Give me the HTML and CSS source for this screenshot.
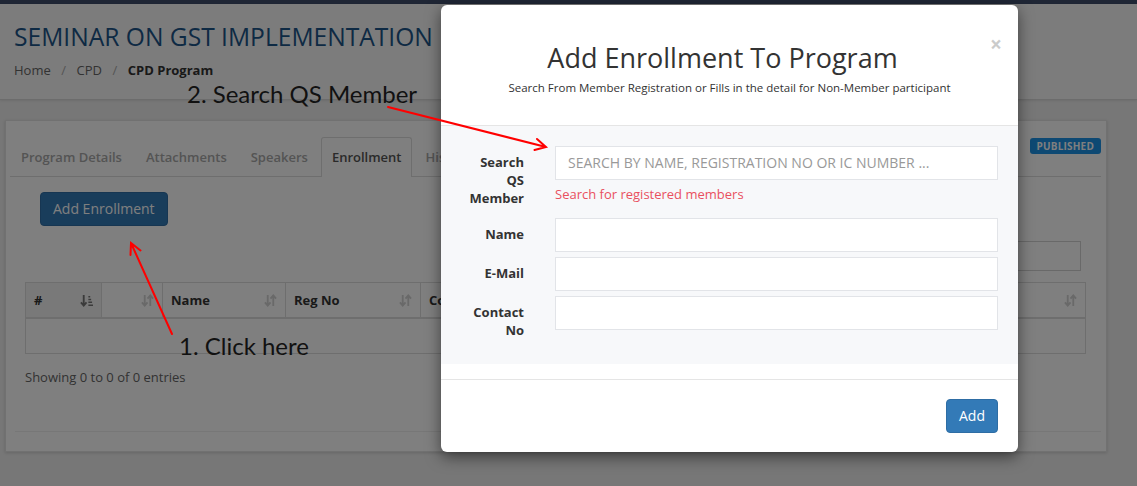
FILE: index.html
```html
<!DOCTYPE html>
<html>
<head>
<meta charset="utf-8">
<link rel="stylesheet" href="styles.css">
</head>
<body>
<div class="topbar"></div>
<header class="page-head">
  <h1 class="page-title">SEMINAR ON GST IMPLEMENTATION</h1>
  <nav class="crumbs"><span>Home</span><span class="sep">/</span><span>CPD</span><span class="sep">/</span><b>CPD Program</b></nav>
</header>
<main class="content">
  <section class="card">
    <div class="tabbar">
      <span class="tab">Program Details</span>
      <span class="tab">Attachments</span>
      <span class="tab">Speakers</span>
      <span class="tab active">Enrollment</span>
      <span class="tab">History</span>
      <span class="badge">PUBLISHED</span>
    </div>
    <div class="pane">
      <div class="btn-row"><span class="btn-dark">Add Enrollment</span></div>
      <div class="filter-row"><span class="filter-box"></span></div>
      <div class="table">
        <div class="tr head">
          <div class="th sorted c1"># <svg class="ico dark" viewBox="0 0 14 14" width="13" height="13"><path d="M4 1v11M1 9l3 3.5 3-3.5" fill="none" stroke="currentColor" stroke-width="2"/><path d="M9 3h2M9 6h3M9 9h4M9 12h5" stroke="currentColor" stroke-width="1.6"/></svg></div>
          <div class="th c2"><span></span><svg class="ico" viewBox="0 0 14 14" width="13" height="13"><path d="M4 1v11M1 9l3 3.5 3-3.5M10 13V2M7 5l3-3.5 3 3.5" fill="none" stroke="currentColor" stroke-width="2"/></svg></div>
          <div class="th c3">Name <svg class="ico" viewBox="0 0 14 14" width="13" height="13"><path d="M4 1v11M1 9l3 3.5 3-3.5M10 13V2M7 5l3-3.5 3 3.5" fill="none" stroke="currentColor" stroke-width="2"/></svg></div>
          <div class="th c4">Reg No <svg class="ico" viewBox="0 0 14 14" width="13" height="13"><path d="M4 1v11M1 9l3 3.5 3-3.5M10 13V2M7 5l3-3.5 3 3.5" fill="none" stroke="currentColor" stroke-width="2"/></svg></div>
          <div class="th c5">Contact No <svg class="ico" viewBox="0 0 14 14" width="13" height="13"><path d="M4 1v11M1 9l3 3.5 3-3.5M10 13V2M7 5l3-3.5 3 3.5" fill="none" stroke="currentColor" stroke-width="2"/></svg></div>
          <div class="th c6">Status <svg class="ico" viewBox="0 0 14 14" width="13" height="13"><path d="M4 1v11M1 9l3 3.5 3-3.5M10 13V2M7 5l3-3.5 3 3.5" fill="none" stroke="currentColor" stroke-width="2"/></svg></div>
        </div>
        <div class="tr body"><div class="td"></div></div>
      </div>
      <p class="info">Showing 0 to 0 of 0 entries</p>
    </div>
    <div class="card-foot"></div>
  </section>
</main>

<div class="backdrop"></div>

<div class="modal">
  <div class="modal-head">
    <span class="close">×</span>
    <h2 class="modal-title">Add Enrollment To Program</h2>
    <p class="modal-sub">Search From Member Registration or Fills in the detail for Non-Member participant</p>
  </div>
  <div class="modal-form">
    <div class="frow first">
      <label class="flabel">Search QS Member</label>
      <div class="fcol">
        <div class="finput placeholder">SEARCH BY NAME, REGISTRATION NO OR IC NUMBER ...</div>
        <div class="fhelp">Search for registered members</div>
      </div>
    </div>
    <div class="frow">
      <label class="flabel">Name</label>
      <div class="fcol"><div class="finput"></div></div>
    </div>
    <div class="frow">
      <label class="flabel">E-Mail</label>
      <div class="fcol"><div class="finput"></div></div>
    </div>
    <div class="frow">
      <label class="flabel">Contact No</label>
      <div class="fcol"><div class="finput"></div></div>
    </div>
  </div>
  <div class="modal-foot"><span class="btn-add">Add</span></div>
</div>

<div class="note note-2">2. Search QS Member</div>
<div class="note note-1">1. Click here</div>
<svg class="arrows" width="1137" height="486" viewBox="0 0 1137 486">
  <g fill="none" stroke="#ff0000" stroke-width="2" stroke-linecap="round">
    <path d="M388 107 L546 147 M534.5 150 L546 147 L537 139"/>
    <path d="M172 334 L131 243 M140.5 250.5 L131 243 L130.5 255"/>
  </g>
</svg>
</body>
</html>
```
FILE: styles.css
```css
* { box-sizing: border-box; }
html, body { margin: 0; padding: 0; }
body {
  width: 1137px;
  height: 486px;
  overflow: hidden;
  background: #eeeeee;
  font-family: "Open Sans", "Liberation Sans", sans-serif;
  color: #333;
  font-size: 13px;
  position: relative;
}
.topbar { height: 4px; background: #3e4c6a; }
.page-head {
  height: 96px;
  background: #f9f9f9;
  border-bottom: 1px solid #d8d8d8;
  box-shadow: 0 1px 2px rgba(0,0,0,0.08);
  padding: 18px 14px 0;
}
.page-title {
  margin: 0;
  font-size: 24.6px;
  font-weight: 400;
  line-height: 30px;
  color: #1c5488;
  letter-spacing: 0;
}
.crumbs { margin-top: 9px; font-size: 13px; color: #666; line-height: 18px; }
.crumbs .sep { color: #aaa; margin: 0 10.5px; }
.crumbs b { color: #333; font-weight: 700; }

.content { padding: 20px 30px 0 5px; }
.card {
  width: 1102px;
  height: 332px;
  background: #fff;
  border: 1px solid #e2e2e2;
  box-shadow: 0 1px 3px rgba(0,0,0,0.15);
  padding: 17px 5px 0 4px;
  display: flex;
  flex-direction: column;
}
.tabbar {
  display: flex;
  align-items: flex-end;
  border-bottom: 1px solid #ddd;
  height: 39px;
}
.tab {
  padding: 0 10px;
  height: 39px;
  line-height: 38px;
  margin-right: 2px;
  font-weight: 600;
  color: #a8a8a8;
  border: 1px solid transparent;
  border-bottom: none;
  border-radius: 3px 3px 0 0;
}
.tab.active {
  color: #555;
  background: #fff;
  border-color: #ddd;
  height: 40px;
  margin-bottom: -1px;
}
.badge {
  margin-left: auto;
  align-self: flex-start;
  background: #1c92e6;
  color: #fff;
  font-size: 10px;
  font-weight: 700;
  line-height: 16px;
  height: 16px;
  padding: 0 7px;
  border-radius: 3px;
  letter-spacing: 0.2px;
}
.pane { padding: 15px 15px 0; flex: 1; }
.btn-row { padding-left: 15px; }
.btn-dark {
  display: inline-block;
  height: 34px;
  line-height: 32px;
  padding: 0 12px;
  background: #337ab7;
  border: 1px solid #2e6da4;
  color: #fff;
  font-size: 14px;
  border-radius: 4px;
}
.filter-row { display: flex; justify-content: flex-end; padding-right: 5px; margin-top: 15px; }
.filter-box { width: 200px; height: 30px; border: 1px solid #d2d2d2; background: #fff; }
.table { margin-top: 11px; width: 1061px; border: 1px solid #ddd; }
.tr { display: flex; }
.tr.head { height: 36px; border-bottom: 2px solid #ddd; }
.th {
  display: flex;
  align-items: center;
  justify-content: space-between;
  padding: 0 8px;
  font-weight: 700;
  color: #333;
  border-right: 1px solid #ddd;
  font-size: 13px;
}
.th.sorted { background: #f3f3f3; }
.c1 { width: 76px; }
.c2 { width: 61px; }
.c3 { width: 123px; }
.c4 { width: 135px; }
.c5 { width: 380px; }
.c6 { flex: 1; border-right: none; }
.ico { color: #d2d2d2; flex: none; }
.ico.dark { color: #777; }
.tr.body { height: 34px; }
.info { margin: 14px 0 0; font-size: 13px; color: #666; line-height: 18px; }
.card-foot { height: 20px; border-top: 1px solid #eee; margin: 0 0 0 5px; }

.backdrop {
  position: absolute;
  inset: 0;
  background: rgba(0,0,0,0.5);
}

.modal {
  position: absolute;
  left: 441px;
  top: 5px;
  width: 577px;
  height: 447px;
  background: #fff;
  border-radius: 6px;
  box-shadow: 0 5px 15px rgba(0,0,0,0.5);
  display: flex;
  flex-direction: column;
}
.modal-head {
  position: relative;
  height: 121px;
  border-bottom: 1px solid #e5e5e5;
  padding-top: 36px;
  text-align: center;
}
.close {
  position: absolute;
  right: 16px;
  top: 27px;
  font-size: 21px;
  font-weight: 700;
  line-height: 24px;
  color: #000;
  opacity: 0.2;
}
.modal-title {
  margin: 0;
  padding-right: 14px;
  font-size: 27px;
  font-weight: 400;
  line-height: 34px;
  color: #333;
}
.modal-sub { margin: 5px 0 0; font-size: 11.5px; line-height: 15px; color: #333; }
.modal-form {
  background: #f7f8fa;
  height: 238px;
  padding: 20px 20px 0 23px;
}
.frow {
  display: grid;
  grid-template-columns: 60px 1fr;
  column-gap: 31px;
  margin-bottom: 5px;
}
.frow.first { margin-bottom: 11px; }
.flabel {
  text-align: right;
  font-weight: 700;
  font-size: 13px;
  line-height: 18px;
  padding-top: 7px;
  color: #333;
}
.finput {
  height: 34px;
  background: #fff;
  border: 1px solid #e2e4e8;
  padding: 0 12px;
  line-height: 32px;
  font-size: 14px;
}
.finput.placeholder { color: #999; }
.fhelp { margin-top: 5px; color: #e9505f; font-size: 13px; line-height: 18px; }
.modal-foot {
  margin-top: 15px;
  border-top: 1px solid #e5e5e5;
  padding: 19px 20px;
  display: flex;
  justify-content: flex-end;
}
.btn-add {
  display: inline-block;
  height: 34px;
  line-height: 32px;
  padding: 0 12px;
  background: #337ab7;
  border: 1px solid #2e6da4;
  color: #fff;
  font-size: 14px;
  border-radius: 4px;
}

.note {
  position: absolute;
  font-family: Lato, "Open Sans", sans-serif;
  font-size: 24px;
  line-height: 24px;
  color: #111;
  white-space: nowrap;
}
.note-2 { left: 187px; top: 82px; }
.note-1 { left: 179px; top: 334px; }
.arrows { position: absolute; left: 0; top: 0; }
```
